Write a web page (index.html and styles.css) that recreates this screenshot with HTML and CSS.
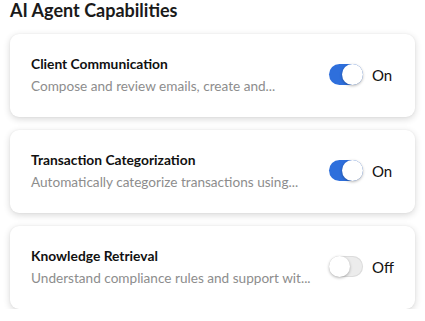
FILE: index.html
```html
<!DOCTYPE html>
<html>
<head>
<meta charset="utf-8">
<link rel="stylesheet" href="styles.css">
</head>
<body>
<div class="page">
  <h1 class="heading">AI Agent Capabilities</h1>
  <div class="list">
    <div class="card">
      <div class="info">
        <div class="name">Client Communication</div>
        <div class="desc">Compose and review emails, create and...</div>
      </div>
      <div class="control">
        <span class="toggle on"><span class="knob"></span></span>
        <span class="state">On</span>
      </div>
    </div>
    <div class="card">
      <div class="info">
        <div class="name">Transaction Categorization</div>
        <div class="desc">Automatically categorize transactions using...</div>
      </div>
      <div class="control">
        <span class="toggle on"><span class="knob"></span></span>
        <span class="state">On</span>
      </div>
    </div>
    <div class="card">
      <div class="info">
        <div class="name">Knowledge Retrieval</div>
        <div class="desc">Understand compliance rules and support wit...</div>
      </div>
      <div class="control">
        <span class="toggle"><span class="knob"></span></span>
        <span class="state">Off</span>
      </div>
    </div>
  </div>
</div>
</body>
</html>
```
FILE: styles.css
```css
html, body {
  margin: 0;
  padding: 0;
  background: #ffffff;
}
body {
  font-family: Lato, "Open Sans", "Liberation Sans", sans-serif;
  color: #111;
}
.page {
  padding: 0 10px 0 10px;
  width: 405px;
}
.heading {
  margin: 0;
  font-size: 18px;
  line-height: 20px;
  font-weight: 700;
  color: #1a1a1a;
}
.list {
  display: flex;
  flex-direction: column;
  gap: 13px;
  margin-top: 14px;
}
.card {
  height: 83px;
  box-sizing: border-box;
  background: #fff;
  border-radius: 9px;
  box-shadow: 0 2px 7px rgba(0,0,0,0.16), 0 0 2px rgba(0,0,0,0.06);
  display: flex;
  align-items: center;
  justify-content: space-between;
  padding: 0 19px 0 21px;
}
.info {
  display: flex;
  flex-direction: column;
  gap: 6px;
  padding-bottom: 1px;
}
.name {
  font-size: 13.8px;
  line-height: 17px;
  font-weight: 700;
  color: #111;
}
.desc {
  font-size: 13.6px;
  line-height: 17px;
  color: #8d8d8d;
}
.control {
  display: flex;
  align-items: center;
  gap: 9px;
  margin-bottom: 2px;
}
.toggle {
  width: 34px;
  height: 21px;
  border-radius: 11px;
  background: #ececec;
  box-shadow: inset 0 0 0 1px #dcdcdc;
  position: relative;
  display: inline-block;
}
.toggle.on {
  background: #2e6fdc;
  box-shadow: none;
}
.knob {
  position: absolute;
  top: 0;
  left: 0;
  width: 21px;
  height: 21px;
  border-radius: 50%;
  background: #fff;
  box-shadow: 0 1px 3px rgba(0,0,0,0.3);
}
.toggle.on .knob {
  left: 13px;
}
.state {
  font-size: 15px;
  color: #111;
  width: 24px;
}
```
